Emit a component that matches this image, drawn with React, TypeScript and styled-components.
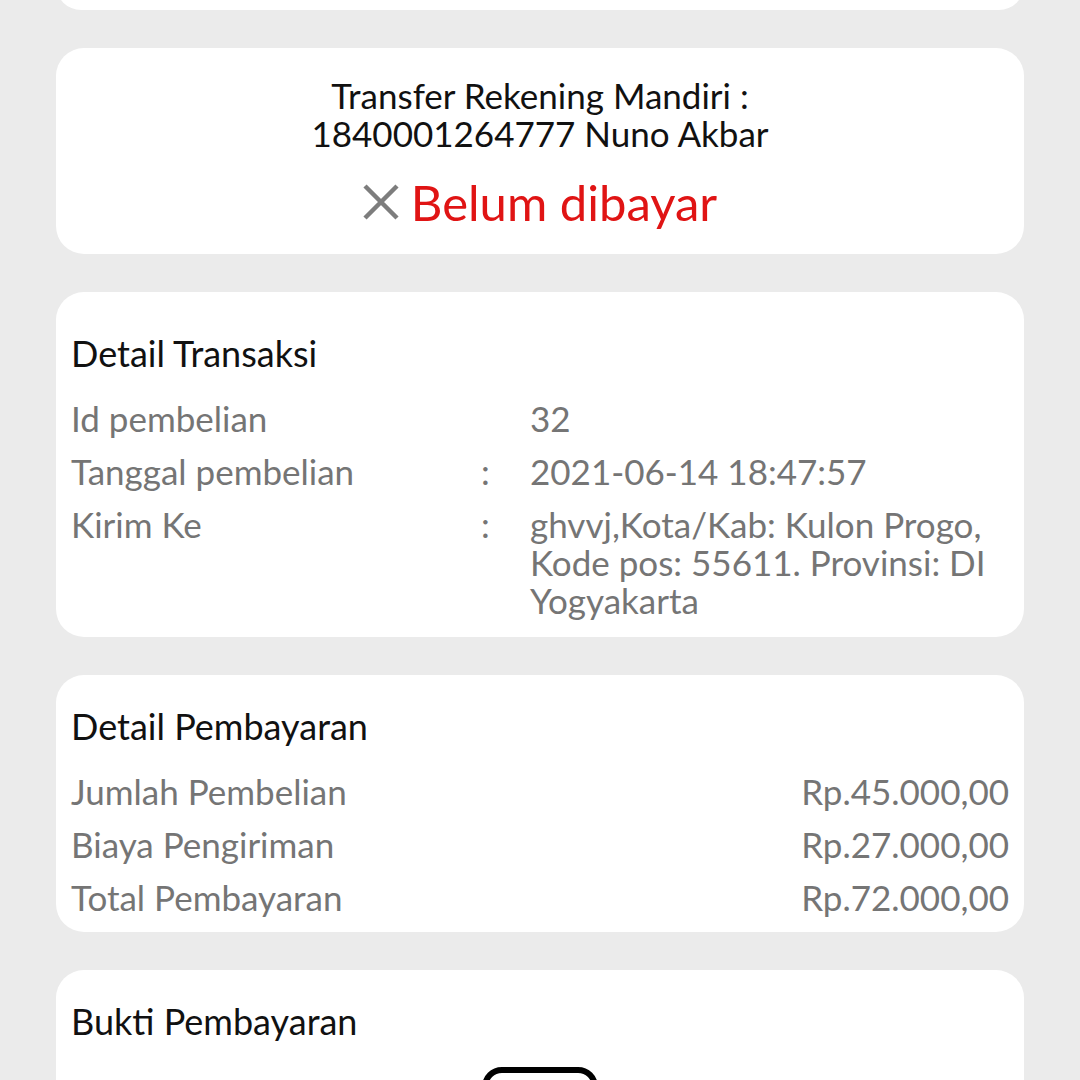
import React from "react";
import styled, { createGlobalStyle } from "styled-components";

const Global = createGlobalStyle`
  html, body { margin: 0; padding: 0; background: #ebebeb; }
  body { font-family: Lato, "Open Sans", sans-serif; height: 1080px; overflow: hidden; }
`;

const Page = styled.div`
  display: flex;
  flex-direction: column;
  gap: 38px;
  padding: 0 56px;
  margin-top: -40px;
`;

const Card = styled.div<{ $top?: number; $bottom?: number; $h?: number }>`
  background: #fff;
  border-radius: 28px;
  padding: ${(p) => p.$top ?? 29}px 15px ${(p) => p.$bottom ?? 16}px;
  flex-shrink: 0;
  ${(p) => (p.$h ? `height: ${p.$h}px; box-sizing: border-box;` : "")}
`;

const StatusCard = styled.div`
  background: #fff;
  border-radius: 28px;
  padding: 28px 15px 27px;
  display: flex;
  flex-direction: column;
  align-items: center;
  text-align: center;
`;

const Bank = styled.div`
  font-size: 35px;
  line-height: 38px;
  color: #111;
`;

const Status = styled.div`
  display: flex;
  align-items: center;
  gap: 12px;
  margin-top: 25px;
  font-size: 49px;
  line-height: 50px;
  color: #e01414;
`;

const Title = styled.div`
  font-size: 36px;
  line-height: 44px;
  color: #111;
  margin-bottom: 24px;
`;

const Rows = styled.div`
  display: flex;
  flex-direction: column;
  gap: 15px;
`;

const Row = styled.div`
  display: grid;
  grid-template-columns: 410px 49px 1fr;
  font-size: 35px;
  line-height: 38px;
  color: #757575;
`;

const PayRow = styled.div`
  display: flex;
  justify-content: space-between;
  font-size: 35px;
  line-height: 38px;
  color: #757575;
`;

const Frame = styled.div`
  box-sizing: border-box;
  width: 116px;
  height: 60px;
  border: 6px solid #000;
  border-radius: 20px;
  margin: 23px auto 0;
`;

const XIcon = () => (
  <svg width="36" height="36" viewBox="0 0 36 36">
    <path d="M2 2 L34 34 M34 2 L2 34" stroke="#7d7d7d" strokeWidth="4.5" />
  </svg>
);

export default function App() {
  return (
    <>
      <Global />
      <Page>
        <Card $h={50} />
        <StatusCard>
          <Bank>
            Transfer Rekening Mandiri :<br />1840001264777 Nuno Akbar
          </Bank>
          <Status>
            <XIcon />
            Belum dibayar
          </Status>
        </StatusCard>
        <Card $top={39} $bottom={18}>
          <Title>Detail Transaksi</Title>
          <Rows>
            <Row>
              <span>Id pembelian</span>
              <span></span>
              <span>32</span>
            </Row>
            <Row>
              <span>Tanggal pembelian</span>
              <span>:</span>
              <span>2021-06-14 18:47:57</span>
            </Row>
            <Row>
              <span>Kirim Ke</span>
              <span>:</span>
              <span>ghvvj,Kota/Kab: Kulon Progo, Kode pos: 55611. Provinsi: DI Yogyakarta</span>
            </Row>
          </Rows>
        </Card>
        <Card>
          <Title>Detail Pembayaran</Title>
          <Rows>
            <PayRow>
              <span>Jumlah Pembelian</span>
              <span>Rp.45.000,00</span>
            </PayRow>
            <PayRow>
              <span>Biaya Pengiriman</span>
              <span>Rp.27.000,00</span>
            </PayRow>
            <PayRow>
              <span>Total Pembayaran</span>
              <span>Rp.72.000,00</span>
            </PayRow>
          </Rows>
        </Card>
        <Card>
          <Title>Bukti Pembayaran</Title>
          <Frame />
        </Card>
      </Page>
    </>
  );
}
